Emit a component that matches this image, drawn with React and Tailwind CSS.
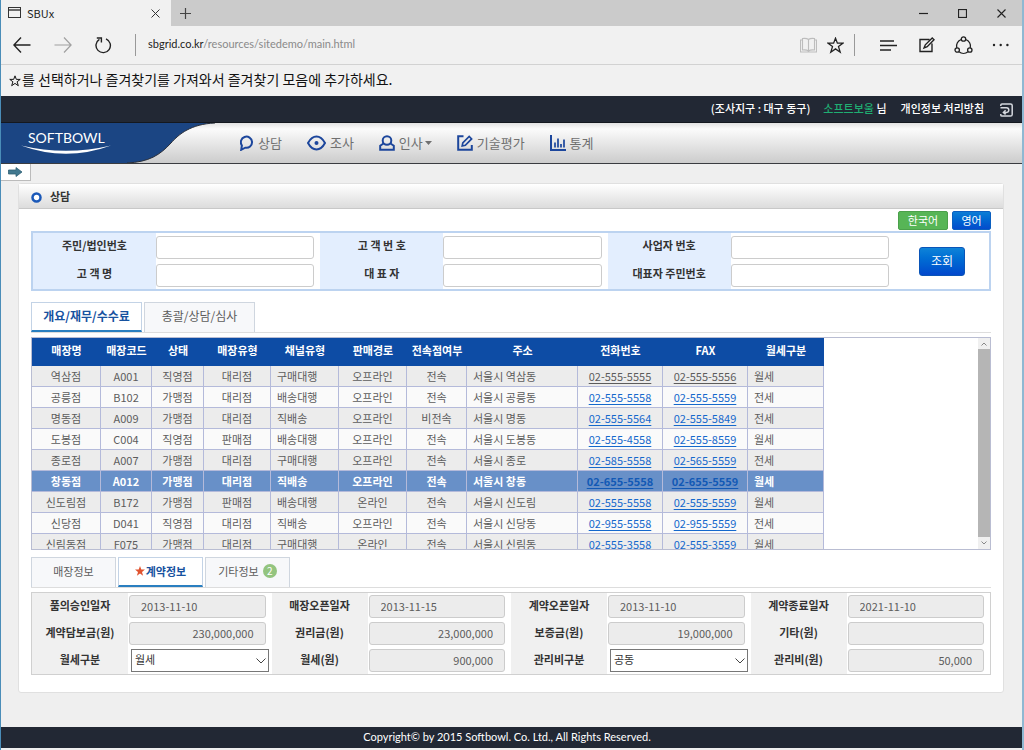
import React from "react";

const stroke = { fill: "none", stroke: "currentColor" };

function TabStrip() {
  return (
    <div className="flex h-[26px] bg-[#cbcbcb]">
      <div className="flex w-[170px] items-center bg-[#f1f1f1] pl-[7px] pr-[11px]">
        <svg width="13" height="12" viewBox="0 0 13 12" {...stroke} className="text-[#333]">
          <rect x="0.5" y="0.5" width="12" height="10" />
          <path d="M0.5 3H12.5" strokeWidth="1.4" />
        </svg>
        <span className="ml-[6px] flex-1 text-[11px] text-[#222]">SBUx</span>
        <button type="button" aria-label="탭 닫기" className="text-[#333]">
          <svg width="9" height="9" viewBox="0 0 9 9" {...stroke}>
            <path d="M0.5 0.5L8.5 8.5M8.5 0.5L0.5 8.5" />
          </svg>
        </button>
      </div>
      <button type="button" aria-label="새 탭" className="ml-[9px] text-[#444]">
        <svg width="11" height="11" viewBox="0 0 11 11" {...stroke}>
          <path d="M5.5 0V11M0 5.5H11" strokeWidth="1.2" />
        </svg>
      </button>
      <div className="ml-auto flex items-center gap-[30px] pr-[16px] text-[#222]">
        <button type="button" aria-label="최소화">
          <svg width="9" height="9" viewBox="0 0 9 9" {...stroke}>
            <path d="M0 4.5H9" strokeWidth="1.2" />
          </svg>
        </button>
        <button type="button" aria-label="최대화">
          <svg width="9" height="9" viewBox="0 0 9 9" {...stroke}>
            <rect x="0.5" y="0.5" width="8" height="8" strokeWidth="1.2" />
          </svg>
        </button>
        <button type="button" aria-label="닫기">
          <svg width="9" height="9" viewBox="0 0 9 9" {...stroke}>
            <path d="M0.5 0.5L8.5 8.5M8.5 0.5L0.5 8.5" strokeWidth="1.1" />
          </svg>
        </button>
      </div>
    </div>
  );
}

function AddressBar() {
  return (
    <div className="flex h-[39px] items-center border-b border-[#d2d2d2] bg-[#f1f1f1] px-[12px] text-[#222]">
      <button type="button" aria-label="뒤로">
        <svg width="18" height="16" viewBox="0 0 18 16" {...stroke} strokeWidth="1.4">
          <path d="M8 0.5L0.9 8L8 15.5M0.9 8H17.5" />
        </svg>
      </button>
      <button type="button" aria-label="앞으로" className="ml-[23px] text-[#a0a0a0]">
        <svg width="18" height="16" viewBox="0 0 18 16" {...stroke} strokeWidth="1.2">
          <path d="M10 0.5L17.1 8L10 15.5M17.1 8H0.5" />
        </svg>
      </button>
      <button type="button" aria-label="새로 고침" className="ml-[23px]">
        <svg width="17" height="17" viewBox="0 0 17 17" {...stroke} strokeWidth="1.4">
          <path d="M11 1.8A7.2 7.2 0 1 1 4.4 2.3" />
          <path d="M1.8 1H6.4V5.6" />
        </svg>
      </button>
      <span className="ml-[23px] h-[22px] w-px bg-[#999]" />
      <span className="ml-[12px] flex-1 pb-[2px] font-['Lato',sans-serif] text-[11px] text-[#8a8a8a]">
        <span className="text-[#222]">sbgrid.co.kr</span>/resources/sitedemo/main.html
      </span>
      <button type="button" aria-label="읽기용 보기" className="text-[#bdbdbd]">
        <svg width="17" height="16" viewBox="0 0 17 16" {...stroke} strokeWidth="1.1">
          <path d="M8.5 2.5C7 1.2 4.5 1.2 2.5 1.5V13C5 12.7 7 12.8 8.5 14C10 12.8 12 12.7 14.5 13V1.5C12.5 1.2 10 1.2 8.5 2.5V14M2.5 3H0.5V15H16.5V3H14.5" />
        </svg>
      </button>
      <button type="button" aria-label="즐겨찾기 추가" className="ml-[10px]">
        <svg width="17" height="17" viewBox="0 0 17 17" {...stroke} strokeWidth="1.3">
          <path d="M8.5 1.2L10.4 6.2H15.9L11.5 9.6L13.2 15.2L8.5 11.9L3.8 15.2L5.5 9.6L1.1 6.2H6.6Z" />
        </svg>
      </button>
      <span className="ml-[10px] h-[22px] w-px bg-[#999]" />
      <button type="button" aria-label="허브" className="ml-[25px]">
        <svg width="17" height="11" viewBox="0 0 17 11" {...stroke} strokeWidth="1.4">
          <path d="M0 1H14M0 5.5H17M0 10H11" />
        </svg>
      </button>
      <button type="button" aria-label="웹 메모 작성" className="ml-[22px]">
        <svg width="16" height="16" viewBox="0 0 16 16" {...stroke} strokeWidth="1.4">
          <path d="M10.5 2.5H1V14.5H13V6.5M5 11L6.3 7.8L13.2 1L15 2.8L8.2 9.7Z" />
        </svg>
      </button>
      <button type="button" aria-label="공유" className="ml-[19px]">
        <svg width="19" height="19" viewBox="0 0 19 19" {...stroke} strokeWidth="1.3">
          <circle cx="9.5" cy="3" r="2.2" />
          <circle cx="3.2" cy="14" r="2.2" />
          <circle cx="15.8" cy="14" r="2.2" />
          <path d="M7.3 3.5A7 7 0 0 0 2.7 11.8M11.7 3.5A7 7 0 0 1 16.3 11.8M5 15.8A7 7 0 0 0 14 15.8" />
        </svg>
      </button>
      <button type="button" aria-label="자세히" className="ml-[19px]">
        <svg width="18" height="4" viewBox="0 0 18 4" fill="currentColor">
          <circle cx="2" cy="2" r="1.2" />
          <circle cx="8.7" cy="2" r="1.2" />
          <circle cx="15.4" cy="2" r="1.2" />
        </svg>
      </button>
    </div>
  );
}

const chatIcon = (
  <svg width="14" height="16" viewBox="0 0 14 16" {...stroke} strokeWidth="2">
    <path d="M1.2 14.8L1.900 10.500A5.600 5.600 0 1 1 5.200 12.700Z" />
  </svg>
);
const eyeIcon = (
  <svg width="19" height="16" viewBox="0 0 19 16" {...stroke} strokeWidth="2">
    <path d="M1 8C3.2 4 6 1.5 9.5 1.5S15.8 4 18 8C15.8 12 13 14.5 9.5 14.5S3.2 12 1 8Z" />
    <circle cx="9.5" cy="8" r="2" fill="currentColor" stroke="none" />
  </svg>
);
const personIcon = (
  <svg width="16" height="16" viewBox="0 0 16 16" {...stroke} strokeWidth="2">
    <circle cx="8" cy="5.500" r="4.300" />
    <path d="M4.500 8.500L1.200 10.800V14.800H14.800V10.800L11.500 8.500" />
  </svg>
);
const editIcon = (
  <svg width="16" height="16" viewBox="0 0 16 16" {...stroke} strokeWidth="2">
    <path d="M6.5 1.2H1.2V14.8H14.8V10" />
    <path d="M5.2 11L5.8 7.8L12.2 1.5L14.6 3.9L8.3 10.3Z" strokeWidth="1.7" />
  </svg>
);
const chartIcon = (
  <svg width="16" height="16" viewBox="0 0 16 16" {...stroke} strokeWidth="2">
    <path d="M1 0V15H16" />
    <path d="M5 12.5V7.5M8 12.5V3.5M11 12.5V9M14 12.5V4.5" strokeWidth="1.7" />
  </svg>
);

const NAV = [
  { label: "상담", icon: chatIcon },
  { label: "조사", icon: eyeIcon },
  { label: "인사", icon: personIcon, menu: true },
  { label: "기술평가", icon: editIcon },
  { label: "통계", icon: chartIcon },
];

function SiteHeader() {
  return (
    <header>
      <div className="flex h-[27px] items-center justify-end border-b border-[#14181f] bg-[#222834] pr-[9px] text-[11px] font-medium text-white">
        <span className="pb-[2px]">(조사지구 : 대구 동구)</span>
        <span className="ml-[13px] pb-[2px]">
          <span className="text-[#1fae72]">소프트보울</span> 님
        </span>
        <a href="#privacy" className="ml-[14px] pb-[2px]">개인정보 처리방침</a>
        <button type="button" aria-label="로그아웃" className="ml-[16px] mt-[2px] text-[#d5d8de]">
          <svg width="13" height="14" viewBox="0 0 13 14" {...stroke} strokeWidth="1.5">
            <path d="M0.800 3V2Q0.800 0.900 2 0.900H10.500Q12.200 0.900 12.200 2.500V11.500Q12.200 13.100 10.500 13.100H2Q0.800 13.100 0.800 12V11" />
            <path d="M0.500 4.800H6.500A2.300 2.300 0 0 1 6.500 9.400H3.500M5.600 7.200L3.400 9.400L5.600 11.400" />
          </svg>
        </button>
      </div>
      <div className="flex h-[41px] border-b border-[#3a3c40] bg-linear-to-b from-[#e2e2e2] via-[#fbfbfb] via-15% to-[#cccccc]">
        <a href="#home" aria-label="SOFTBOWL" className="w-[239px] shrink-0">
          <svg width="239" height="40" viewBox="0 0 239 40">
            <path d="M0 0H214C190 1 178 11 170 20C159 32 148 39 126 40H0Z" fill="#1b4583" />
            <path d="M214 0C190 1 178 11 170 20C159 32 148 39 126 40" fill="none" stroke="#2a2f3a" strokeWidth="1" />
            <text x="27" y="20" fill="#fff" fontFamily="Lato, sans-serif" fontSize="14">SOFTBOWL</text>
            <path d="M20 22.500Q65 39 110 22.500Q65 33 20 22.500Z" fill="#fff" />
          </svg>
        </a>
        <nav className="flex items-center gap-[25px]">
          {NAV.map((n) => (
            <a key={n.label} href={"#" + n.label} className="flex items-center gap-[4px] text-[13px] text-[#707070]">
              <span className="text-[#1c469c]">{n.icon}</span>
              <span className="flex items-center">
                {n.label}
                {n.menu && (
                  <svg width="7" height="4" viewBox="0 0 7 4" className="ml-[2px]">
                    <path d="M0 0H7L3.5 4Z" fill="#707070" />
                  </svg>
                )}
              </span>
            </a>
          ))}
        </nav>
      </div>
    </header>
  );
}

const SEARCH = [
  ["주민/법인번호", "고 객 명"],
  ["고 객 번 호", "대 표 자"],
  ["사업자 번호", "대표자 주민번호"],
];

function SearchForm() {
  return (
    <form className="flex border-2 border-[#bcd3f0] bg-white" onSubmit={(e) => e.preventDefault()}>
      {SEARCH.map((rows, g) => (
        <div key={g} className="flex-1">
          {rows.map((label, r) => (
            <div key={label} className="flex h-[28px]">
              <label
                htmlFor={`search-${g}-${r}`}
                className="flex w-[123px] shrink-0 items-center justify-center bg-[#e3eefe] pb-[4px] text-[11px] font-bold text-[#333]"
              >
                {label}
              </label>
              <div className="flex flex-1 items-center pr-[6px]">
                <input
                  id={`search-${g}-${r}`}
                  type="text"
                  className="h-[23px] w-full min-w-0 rounded-[3px] border border-[#ccc] bg-white px-2 text-[11px]"
                />
              </div>
            </div>
          ))}
        </div>
      ))}
      <div className="flex w-[94px] items-center justify-center">
        <button
          type="submit"
          className="h-[29px] w-[46px] rounded-[3px] border border-[#0a55b8] bg-linear-to-b from-[#0f83d8] to-[#0447cc] text-[12px] text-white"
        >
          조회
        </button>
      </div>
    </form>
  );
}

function Tabs({ items, width }) {
  return (
    <div role="tablist" className="flex gap-[2px] border-b border-[#ddd]">
      {items.map((t) => (
        <button
          key={t.label}
          type="button"
          role="tab"
          aria-selected={!!t.active}
          className={`${width} flex h-[30px] items-center justify-center border ${
            t.active
              ? "border-b-2 border-[#c3d3e6] border-b-[#2a7fc0] bg-white pb-px font-bold text-[#17529f]"
              : "border-b-0 border-[#cfd6df] bg-[#f7f8fa] pb-[3px] text-[#5c5c5c]"
          }`}
        >
          {t.star && (
            <svg width="10" height="10" viewBox="0 0 10 10" className="mr-px">
              <path d="M5 0L6.3 3.600H10L7 5.900L8.100 9.700L5 7.400L1.900 9.700L3 5.900L0 3.600H3.700Z" fill="#e0532f" />
            </svg>
          )}
          {t.label}
          {t.badge && (
            <span className="ml-[4px] flex size-[14px] items-center justify-center rounded-full bg-[#93c47f] text-[10px] text-white">
              {t.badge}
            </span>
          )}
        </button>
      ))}
    </div>
  );
}

const HEADS = ["매장명", "매장코드", "상태", "매장유형", "채널유형", "판매경로", "전속점여부", "주소", "전화번호", "FAX", "월세구분"];
const ROWS = [
  ["역삼점", "A001", "직영점", "대리점", "구매대행", "오프라인", "전속", "서울시 역삼동", "02-555-5555", "02-555-5556", "월세"],
  ["공릉점", "B102", "가맹점", "대리점", "배송대행", "오프라인", "전속", "서울시 공릉동", "02-555-5558", "02-555-5559", "전세"],
  ["명동점", "A009", "가맹점", "대리점", "직배송", "오프라인", "비전속", "서울시 명동", "02-555-5564", "02-555-5849", "전세"],
  ["도봉점", "C004", "직영점", "판매점", "배송대행", "오프라인", "전속", "서울시 도봉동", "02-555-4558", "02-555-8559", "월세"],
  ["종로점", "A007", "가맹점", "대리점", "구매대행", "오프라인", "전속", "서울시 종로", "02-585-5558", "02-565-5559", "전세"],
  ["창동점", "A012", "가맹점", "대리점", "직배송", "오프라인", "전속", "서울시 창동", "02-655-5558", "02-655-5559", "월세"],
  ["신도림점", "B172", "가맹점", "판매점", "배송대행", "온라인", "전속", "서울시 신도림", "02-555-5558", "02-555-5559", "월세"],
  ["신당점", "D041", "직영점", "대리점", "직배송", "오프라인", "전속", "서울시 신당동", "02-955-5558", "02-955-5559", "전세"],
  ["신림동점", "F075", "가맹점", "대리점", "구매대행", "온라인", "전속", "서울시 신림동", "02-555-3558", "02-555-3559", "월세"],
];
const SELECTED = 5;
const LEFT = [4, 7, 10];

function StoreTable() {
  return (
    <div className="flex h-[213px] border border-[#b9bdd2] bg-white">
      <div className="min-w-0 flex-1 overflow-hidden">
        <table className="w-[792px] table-fixed border-separate border-spacing-0 text-[11px]">
          <colgroup>
            <col className="w-[69px]" />
            <col className="w-[51px]" />
            <col className="w-[52px]" />
            <col className="w-[67px]" />
            <col className="w-[68px]" />
            <col className="w-[68px]" />
            <col className="w-[60px]" />
            <col className="w-[111px]" />
            <col className="w-[85px]" />
            <col className="w-[85px]" />
            <col className="w-[76px]" />
          </colgroup>
          <thead>
            <tr className="h-[28px] bg-[#0d4ca5] text-white">
              {HEADS.map((h) => (
                <th key={h} scope="col" className="p-0 pb-[4px] text-center font-bold leading-[20px]">{h}</th>
              ))}
            </tr>
          </thead>
          <tbody>
            {ROWS.map((row, i) => {
              const sel = i === SELECTED;
              const tone = sel
                ? "bg-[#6890c8] font-bold text-white"
                : i % 2 === 0
                  ? "bg-[#ececec] text-[#5c5c5c]"
                  : "bg-[#fafafa] text-[#5c5c5c]";
              const link = sel ? "text-[#1259b5]" : i === 0 ? "text-[#5c5c5c]" : "text-[#1468cc]";
              return (
                <tr key={i} className={tone}>
                  {row.map((c, j) => (
                    <td
                      key={j}
                      className={`h-[21px] overflow-hidden whitespace-nowrap border-b border-r border-[#b4bada] p-0 leading-[20px] ${
                        LEFT.includes(j) ? "pl-[6px] text-left" : "text-center"
                      }`}
                    >
                      {j === 8 || j === 9 ? (
                        <a href={"tel:" + c} className={`${link} underline underline-offset-2`}>{c}</a>
                      ) : (
                        c
                      )}
                    </td>
                  ))}
                </tr>
              );
            })}
          </tbody>
        </table>
      </div>
      <div className="flex w-[12px] flex-col bg-[#b5b5b5] text-[#888]">
        <button type="button" aria-label="위로" className="flex h-[11px] items-center justify-center bg-[#f0f0f0]">
          <svg width="6" height="4" viewBox="0 0 6 4" {...stroke}>
            <path d="M0.5 3.500L3 1L5.500 3.500" />
          </svg>
        </button>
        <button type="button" aria-label="아래로" className="mt-auto flex h-[12px] items-center justify-center bg-[#f0f0f0]">
          <svg width="6" height="4" viewBox="0 0 6 4" {...stroke}>
            <path d="M0.5 0.5L3 3L5.500 0.500" />
          </svg>
        </button>
      </div>
    </div>
  );
}

const DETAIL = [
  [
    { label: "품의승인일자", value: "2013-11-10" },
    { label: "계약담보금(원)", value: "230,000,000", num: true },
    { label: "월세구분", value: "월세", select: true },
  ],
  [
    { label: "매장오픈일자", value: "2013-11-15" },
    { label: "권리금(원)", value: "23,000,000", num: true },
    { label: "월세(원)", value: "900,000", num: true },
  ],
  [
    { label: "계약오픈일자", value: "2013-11-10" },
    { label: "보증금(원)", value: "19,000,000", num: true },
    { label: "관리비구분", value: "공동", select: true },
  ],
  [
    { label: "계약종료일자", value: "2021-11-10" },
    { label: "기타(원)", value: "", num: true },
    { label: "관리비(원)", value: "50,000", num: true },
  ],
];

function DetailForm() {
  return (
    <div className="flex border border-[#d0d0d0] bg-white">
      {DETAIL.map((fields, g) => (
        <div key={g} className="min-w-0 flex-1">
          {fields.map((f, r) => (
            <div key={f.label} className="flex h-[27px]">
              <label
                htmlFor={`detail-${g}-${r}`}
                className="flex w-[96px] shrink-0 items-center justify-center bg-[#f0f0f0] pb-[3px] text-[11px] font-bold text-[#333]"
              >
                {f.label}
              </label>
              {f.select ? (
                <div className="relative flex flex-1 items-center px-[3px]">
                  <select
                    id={`detail-${g}-${r}`}
                    defaultValue={f.value}
                    className="h-[23px] w-full appearance-none border border-[#777] bg-white px-[3px] pb-[3px] text-[11px] text-[#333]"
                  >
                    <option>{f.value}</option>
                  </select>
                  <svg width="10" height="6" viewBox="0 0 10 6" {...stroke} className="pointer-events-none absolute right-[6px] text-[#444]">
                    <path d="M0.5 0.5L5 5L9.500 0.500" />
                  </svg>
                </div>
              ) : (
                <div className="flex flex-1 items-center pl-px pr-[6px]">
                  <input
                    id={`detail-${g}-${r}`}
                    type="text"
                    readOnly
                    value={f.value}
                    className={`h-[23px] w-full min-w-0 rounded-[3px] border border-[#ccc] bg-[#ececec] px-[11px] pb-[2px] text-[11px] text-[#5c5c5c] ${
                      f.num ? "text-right" : "text-left"
                    }`}
                  />
                </div>
              )}
            </div>
          ))}
        </div>
      ))}
    </div>
  );
}

export default function App() {
  return (
    <div className="flex min-h-screen flex-col border-l border-r-2 border-l-[#4a8db8] border-r-[#8fb8d2] bg-[#efefef] font-['Noto_Sans_CJK_KR','Open_Sans',sans-serif] text-[12px] leading-[16px]">
      <TabStrip />
      <AddressBar />
      <div className="flex h-[31px] items-center bg-[#f1f1f1] pb-[3px] pl-[8px] text-[14px] text-[#111]">
        <svg width="12" height="12" viewBox="0 0 17 17" {...stroke} strokeWidth="1.4" className="mr-px mt-[3px]">
          <path d="M8.5 1.2L10.4 6.2H15.9L11.5 9.6L13.2 15.2L8.5 11.9L3.8 15.2L5.5 9.6L1.1 6.2H6.6Z" />
        </svg>
        를 선택하거나 즐겨찾기를 가져와서 즐겨찾기 모음에 추가하세요.
      </div>
      <SiteHeader />
      <button
        type="button"
        aria-label="메뉴 펼치기"
        className="flex h-[17px] w-[30px] items-center border-b border-r border-[#bbb] bg-white pl-[7px]"
      >
        <svg width="15" height="10" viewBox="0 0 15 10">
          <path d="M0.5 3H8V0.5L14 5L8 9.500V7H0.5Z" fill="#41788f" stroke="#2f5f75" strokeWidth="0.8" />
        </svg>
      </button>
      <main className="ml-[17px] mr-[18px] mt-[2px] rounded-[3px] border border-[#e0e0e0] bg-white">
        <h1 className="flex h-[25px] items-center border-b border-[#c8c8c8] bg-linear-to-b from-white to-[#dcdcdc] pl-[12px] text-[11px] font-bold text-[#333]">
          <svg width="11" height="11" viewBox="0 0 11 11" className="mr-[8px] mt-[2px]">
            <circle cx="5.5" cy="5.5" r="4" fill="#fff" stroke="#1a58b8" strokeWidth="2.500" />
          </svg>
          상담
        </h1>
        <div className="flex flex-col px-[12px] pb-[17px]">
          <div className="mb-px mt-[2px] flex justify-end gap-[4px] text-[11px] text-white">
            <button type="button" className="h-[19px] w-[50px] rounded-[2px] border border-[#4ba04b] bg-[#57b556] leading-[15px]">한국어</button>
            <button type="button" className="h-[19px] w-[39px] rounded-[2px] border border-[#0a5fc0] bg-linear-to-b from-[#0d7dd6] to-[#054bcc] leading-[15px]">영어</button>
          </div>
          <SearchForm />
          <div className="mt-[11px]">
            <Tabs
              width="w-[111px] text-[12px]"
              items={[{ label: "개요/재무/수수료", active: true }, { label: "총괄/상담/심사" }]}
            />
          </div>
          <div className="mt-[4px]">
            <StoreTable />
          </div>
          <div className="mt-[7px]">
            <Tabs
              width="w-[85px] text-[11px]"
              items={[
                { label: "매장정보" },
                { label: "계약정보", active: true, star: true },
                { label: "기타정보", badge: 2 },
              ]}
            />
          </div>
          <div className="mt-[4px]">
            <DetailForm />
          </div>
        </div>
      </main>
      <footer className="mb-[2px] mt-auto flex h-[21px] items-center justify-center bg-[#222834] pb-[2px] pr-[9px] font-['Lato',sans-serif] text-[11px] text-white">
        Copyright© by 2015 Softbowl. Co. Ltd., All Rights Reserved.
      </footer>
    </div>
  );
}
